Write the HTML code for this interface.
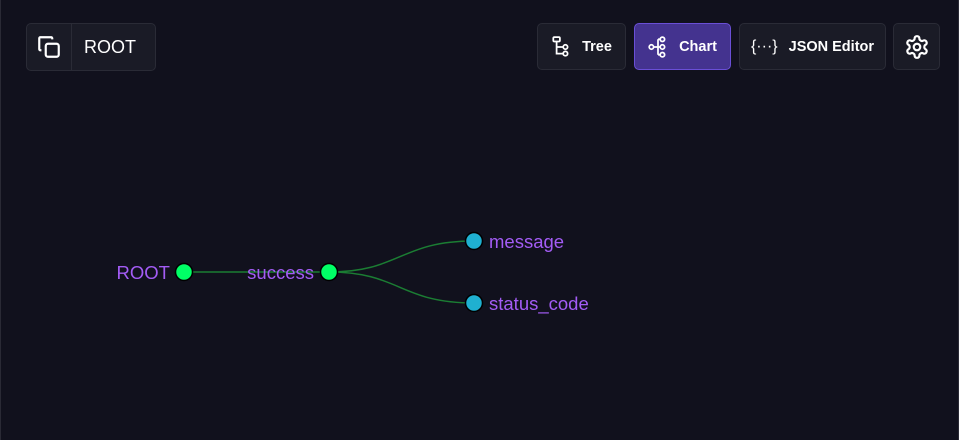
<!DOCTYPE html>
<html><head><style>
body{margin:0;width:959px;height:440px;background:#11111d;font-family:"Liberation Sans",sans-serif;overflow:hidden;position:relative}
.edge{position:absolute;top:0;width:1px;height:440px;background:#2a2a35}
.box{position:absolute;background:#1a1b26;border:1px solid #2a2b36;border-radius:5px;box-sizing:border-box;color:#fff;display:flex;align-items:center}
.btn{font-weight:bold;font-size:14.5px;justify-content:center;gap:11px}
</style></head><body>
<div class="edge" style="left:0"></div><div class="edge" style="right:0"></div>
<div class="box" style="left:26px;top:23px;width:130px;height:48px">
 <div style="width:44px;height:46px;border-right:1px solid #2a2b36;display:flex;align-items:center;justify-content:center">
 <svg width="26" height="26" viewBox="0 0 24 24" fill="none" stroke="#fff" stroke-width="2" stroke-linejoin="round"><rect x="9" y="9" width="12" height="12" rx="2"/><path d="M5 15H4a1 1 0 0 1-1-1V4a1 1 0 0 1 1-1h10a1 1 0 0 1 1 1v1"/></svg></div>
 <span style="font-size:18px;margin-left:12px">ROOT</span>
</div>
<div class="box btn" style="left:537px;top:23px;width:89px;height:47px">
<svg width="20" height="22" viewBox="0 0 18 20" fill="none" stroke="#fff" stroke-width="1.6"><rect x="2" y="1" width="6" height="4" rx="1"/><circle cx="13" cy="10" r="2"/><circle cx="13" cy="16" r="2"/><path d="M5 5v11h6M5 10h6"/></svg><span>Tree</span></div>
<div class="box btn" style="left:634px;top:23px;width:97px;height:47px;background:#44338f;border-color:#6a4fd6">
<svg width="20" height="22" viewBox="0 0 18 20" fill="none" stroke="#fff" stroke-width="1.6"><circle cx="3" cy="10" r="2"/><circle cx="13" cy="3" r="2"/><circle cx="13" cy="10" r="2"/><circle cx="13" cy="17" r="2"/><path d="M5 10h6M9 3v14M9 3h2M9 17h2"/></svg><span>Chart</span></div>
<div class="box btn" style="left:739px;top:23px;width:147px;height:47px">
<span style="font-weight:normal;font-size:16px">{···}</span><span>JSON Editor</span></div>
<div class="box" style="left:893px;top:23px;width:47px;height:47px;justify-content:center">
<svg width="26" height="26" viewBox="0 0 24 24" fill="none" stroke="#fff" stroke-width="2" stroke-linejoin="round"><path d="M12.2 2h-.4a2 2 0 0 0-2 2v.2a2 2 0 0 1-1 1.7l-.4.3a2 2 0 0 1-2 0l-.2-.1a2 2 0 0 0-2.7.7l-.2.4a2 2 0 0 0 .7 2.7l.2.1a2 2 0 0 1 1 1.7v.5a2 2 0 0 1-1 1.8l-.2.1a2 2 0 0 0-.7 2.7l.2.4a2 2 0 0 0 2.7.7l.2-.1a2 2 0 0 1 2 0l.4.3a2 2 0 0 1 1 1.7v.2a2 2 0 0 0 2 2h.4a2 2 0 0 0 2-2v-.2a2 2 0 0 1 1-1.7l.4-.3a2 2 0 0 1 2 0l.2.1a2 2 0 0 0 2.7-.7l.2-.4a2 2 0 0 0-.7-2.7l-.2-.1a2 2 0 0 1-1-1.8v-.5a2 2 0 0 1 1-1.7l.2-.1a2 2 0 0 0 .7-2.7l-.2-.4a2 2 0 0 0-2.7-.7l-.2.1a2 2 0 0 1-2 0l-.4-.3a2 2 0 0 1-1-1.7V4a2 2 0 0 0-2-2z"/><circle cx="12" cy="12" r="3"/></svg></div>
<svg width="959" height="440" style="position:absolute;left:0;top:0" font-family="Liberation Sans, sans-serif" font-size="18.5">
<g fill="none" stroke="#1b7d33" stroke-width="1.5"><path d="M184 272H329"/><path d="M329 272C400 272 400 241 474 241"/><path d="M329 272C400 272 400 303 474 303"/></g>
<g stroke="#000" stroke-width="1.5"><circle cx="184" cy="272" r="8.5" fill="#00ff66"/><circle cx="329" cy="272" r="8.5" fill="#00ff66"/><circle cx="474" cy="241" r="8.5" fill="#1fb0d0"/><circle cx="474" cy="303" r="8.5" fill="#1fb0d0"/></g>
<g fill="#a35cf5"><text x="170" y="279" text-anchor="end">ROOT</text><text x="314" y="279" text-anchor="end">success</text><text x="489" y="248">message</text><text x="489" y="310">status_code</text></g>
</svg>
</body></html>
